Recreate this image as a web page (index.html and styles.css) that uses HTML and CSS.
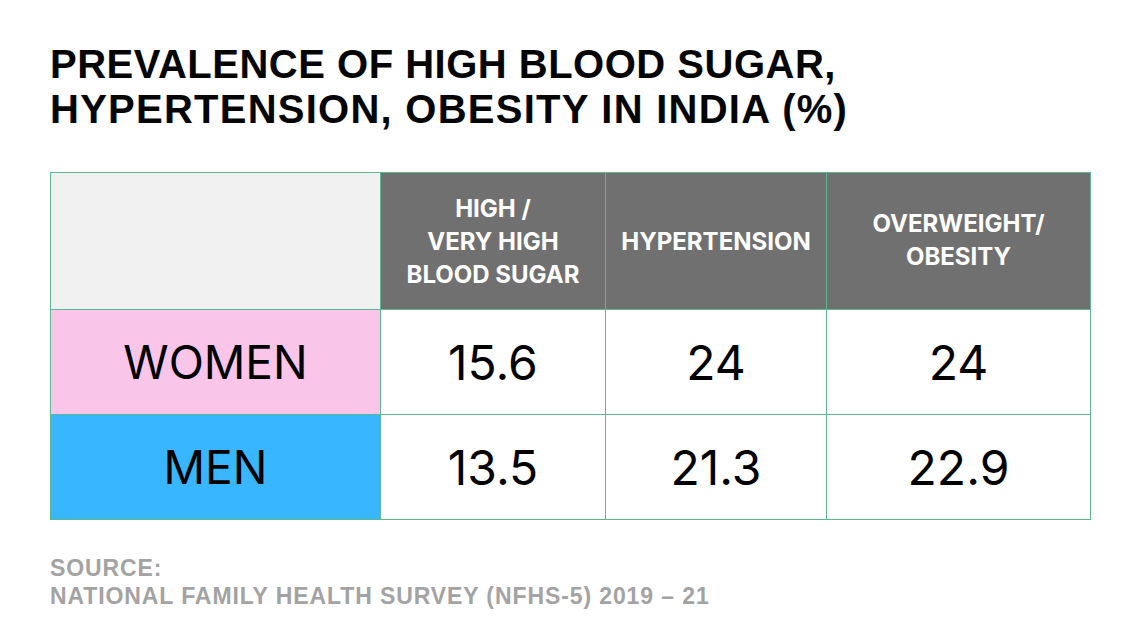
FILE: index.html
```html
<!DOCTYPE html>
<html>
<head>
<meta charset="utf-8">
<link rel="stylesheet" href="styles.css">
</head>
<body>
<div class="page">
  <h1 class="title"><span class="line1">PREVALENCE OF HIGH BLOOD SUGAR,</span><br><span class="line2">HYPERTENSION, OBESITY IN INDIA (%)</span></h1>
  <table class="data">
    <colgroup>
      <col class="c1"><col class="c2"><col class="c3"><col class="c4">
    </colgroup>
    <tr class="head">
      <th class="blank"></th>
      <th>HIGH /<br>VERY HIGH<br>BLOOD SUGAR</th>
      <th>HYPERTENSION</th>
      <th class="two">OVERWEIGHT/<br>OBESITY</th>
    </tr>
    <tr class="row">
      <td class="label women">WOMEN</td>
      <td>15.6</td>
      <td>24</td>
      <td>24</td>
    </tr>
    <tr class="row">
      <td class="label men">MEN</td>
      <td>13.5</td>
      <td>21.3</td>
      <td>22.9</td>
    </tr>
  </table>
  <p class="source">SOURCE:<br>NATIONAL FAMILY HEALTH SURVEY (NFHS-5) 2019 – 21</p>
</div>
</body>
</html>
```

FILE: styles.css
```css
html, body {
  margin: 0;
  padding: 0;
  background: #ffffff;
}
.page {
  padding: 42px 0 0 50px;
  width: 1040px;
}
.title {
  margin: 0;
  font-family: "Liberation Sans", Arial, sans-serif;
  font-weight: 700;
  font-size: 40px;
  line-height: 45px;
  color: #050505;
}
.title .line1 { letter-spacing: 0.5px; }
.title .line2 { letter-spacing: 1.25px; }
.data {
  margin-top: 40px;
  border-collapse: collapse;
  table-layout: fixed;
  width: 1040px;
  font-family: Inter, "Noto Sans", sans-serif;
}
.c1 { width: 330px; }
.c2 { width: 225px; }
.c3 { width: 221px; }
.c4 { width: 264px; }
.data th, .data td {
  border: 1px solid #5cb98f;
  text-align: center;
  padding: 0;
}
.head th {
  height: 133px;
  background: #707070;
  color: #ffffff;
  font-weight: 700;
  font-size: 24px;
  line-height: 33px;
}
.head th.blank {
  background: #f0f0f0;
}
.head th.two {
  padding-bottom: 3px;
}
.row td {
  height: 104px;
  font-size: 48px;
  font-weight: 400;
  color: #000000;
  background: #ffffff;
}
.row td.label {
  font-size: 46px;
}
.row td.women { background: #f9c6ea; }
.row td.men { background: #38b6ff; }
.source {
  margin: 34px 0 0;
  font-family: "Liberation Sans", Arial, sans-serif;
  font-weight: 700;
  font-size: 23px;
  line-height: 28px;
  letter-spacing: 0.9px;
  color: #a3a3a3;
}
```
